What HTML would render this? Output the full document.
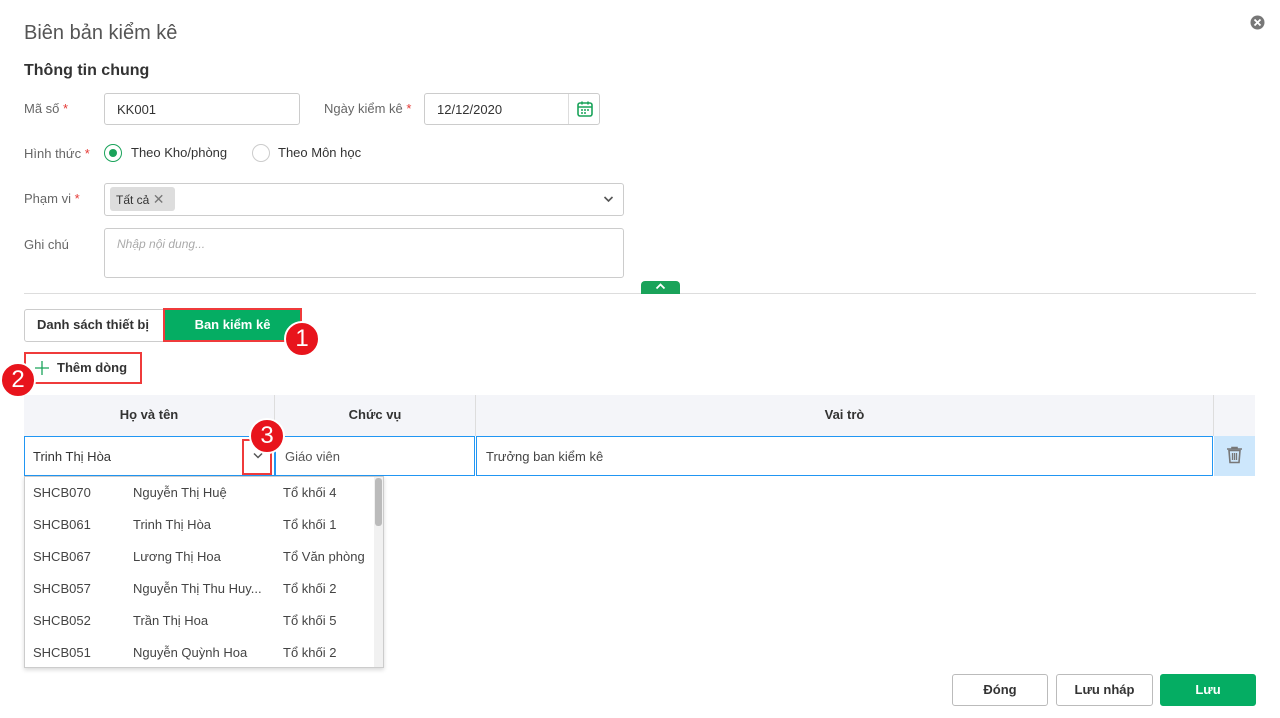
<!DOCTYPE html>
<html><head><meta charset="utf-8"><style>
*{box-sizing:border-box;margin:0;padding:0}
html,body{width:1280px;height:718px;overflow:hidden}
body{background:#fff;font-family:"Liberation Sans",sans-serif;color:#333;position:relative;font-size:13px;max-height:718px}
.a{position:absolute}
.lbl{color:#666;font-size:13px}
.req{color:#e53935}
.inp{border:1px solid #ccc;border-radius:3px;background:#fff}
.red{border:2px solid #ef3b3b}
.badge{width:36px;height:36px;border-radius:50%;background:#e8141c;border:2px solid #fff;color:#fff;font-size:24px;text-align:center;line-height:32px}
.th{background:#f4f5f9;font-weight:bold;font-size:13px;text-align:center;line-height:40px;color:#333}
.row{position:absolute;left:0;height:32px;line-height:32px;font-size:13px;color:#444;width:350px}
.row span{position:absolute}
.btn{border:1px solid #bbb;border-radius:3px;font-weight:bold;text-align:center;line-height:30px;font-size:13px;color:#333}
</style></head><body>
<div class="a" style="left:24px;top:22px;font-size:20px;color:#555">Biên bản kiểm kê</div>
<svg class="a" style="left:1250px;top:15px" width="15" height="15" viewBox="0 0 15 15"><circle cx="7.5" cy="7.5" r="7" fill="#777"/><path d="M4.5 4.5l6 6M10.5 4.5l-6 6" stroke="#fff" stroke-width="1.8"/></svg>
<div class="a" style="left:24px;top:62px;font-size:16px;font-weight:bold;color:#333">Thông tin chung</div>

<div class="a lbl" style="left:24px;top:101px">Mã số <span class="req">*</span></div>
<div class="a inp" style="left:104px;top:93px;width:196px;height:32px;padding:8px 12px">KK001</div>
<div class="a lbl" style="left:324px;top:101px">Ngày kiểm kê <span class="req">*</span></div>
<div class="a inp" style="left:424px;top:93px;width:176px;height:32px;padding:8px 12px">12/12/2020</div>
<div class="a" style="left:568px;top:94px;width:1px;height:30px;background:#ddd"></div>
<svg class="a" style="left:576px;top:100px" width="18" height="18" viewBox="0 0 18 18"><rect x="2" y="3" width="14" height="13" rx="2" fill="none" stroke="#1aa35a" stroke-width="1.6"/><path d="M2 7h14M6 1.5v3M12 1.5v3" stroke="#1aa35a" stroke-width="1.6"/><path d="M5 10h2M8 10h2M11 10h2M5 13h2M8 13h2" stroke="#1aa35a" stroke-width="1.4"/></svg>

<div class="a lbl" style="left:24px;top:146px">Hình thức <span class="req">*</span></div>
<div class="a" style="left:104px;top:144px;width:18px;height:18px;border:1px solid #1aa35a;border-radius:50%"></div>
<div class="a" style="left:109px;top:149px;width:8px;height:8px;background:#1aa35a;border-radius:50%"></div>
<div class="a" style="left:131px;top:145px">Theo Kho/phòng</div>
<div class="a" style="left:252px;top:144px;width:18px;height:18px;border:1px solid #ccc;border-radius:50%"></div>
<div class="a" style="left:278px;top:145px">Theo Môn học</div>

<div class="a lbl" style="left:24px;top:191px">Phạm vi <span class="req">*</span></div>
<div class="a inp" style="left:104px;top:183px;width:520px;height:33px"></div>
<div class="a" style="left:110px;top:187px;width:65px;height:24px;background:#ddd;border-radius:3px;font-size:12px;line-height:24px;padding-left:6px">Tất cả <span style="color:#777;font-size:14px">✕</span></div>
<svg class="a" style="left:603px;top:195px" width="11" height="8" viewBox="0 0 11 8"><path d="M1.5 2l4 4 4-4" fill="none" stroke="#555" stroke-width="1.6"/></svg>

<div class="a lbl" style="left:24px;top:237px">Ghi chú</div>
<div class="a inp" style="left:104px;top:228px;width:520px;height:50px;padding:8px 12px;color:#aaa;font-style:italic;font-size:12px">Nhập nội dung...</div>

<div class="a" style="left:24px;top:293px;width:1232px;height:1px;background:#ddd"></div>
<div class="a" style="left:641px;top:281px;width:39px;height:13px;background:#1aa35a;border-radius:4px 4px 0 0"></div>
<svg class="a" style="left:655px;top:283px" width="11" height="7" viewBox="0 0 11 7"><path d="M1.5 5.5l4-4 4 4" fill="none" stroke="#fff" stroke-width="1.8"/></svg>

<div class="a" style="left:24px;top:309px;width:270px;height:33px;border:1px solid #ccc;border-radius:3px"></div>
<div class="a" style="left:37px;top:317px;font-weight:bold;font-size:13px">Danh sách thiết bị</div>
<div class="a" style="left:163px;top:308px;width:139px;height:34px;background:#05ad63;border:2px solid #ef3b3b;color:#fff;font-weight:bold;text-align:center;line-height:30px">Ban kiểm kê</div>
<div class="a badge" style="left:284px;top:321px">1</div>

<div class="a red" style="left:24px;top:352px;width:118px;height:32px"></div>
<svg class="a" style="left:35px;top:361px" width="14" height="14" viewBox="0 0 14 14"><path d="M7 0v14M0 7h14" stroke="#1aa35a" stroke-width="1.3"/></svg>
<div class="a" style="left:57px;top:360px;font-weight:bold;font-size:13px">Thêm dòng</div>
<div class="a badge" style="left:0px;top:362px">2</div>

<div class="a th" style="left:24px;top:395px;width:250px;height:41px">Họ và tên</div>
<div class="a th" style="left:275px;top:395px;width:200px;height:41px">Chức vụ</div>
<div class="a th" style="left:476px;top:395px;width:737px;height:41px">Vai trò</div>
<div class="a th" style="left:1214px;top:395px;width:41px;height:41px"></div>
<div class="a" style="left:274px;top:395px;width:1px;height:41px;background:#ddd"></div>
<div class="a" style="left:475px;top:395px;width:1px;height:41px;background:#ddd"></div>
<div class="a" style="left:1213px;top:395px;width:1px;height:41px;background:#ddd"></div>

<div class="a" style="left:24px;top:436px;width:251px;height:40px;border:1px solid #2196f3;padding:12px 8px;font-size:13px">Trinh Thị Hòa</div>
<div class="a" style="left:275px;top:436px;width:200px;height:40px;border:1px solid #2196f3;padding:12px 9px;color:#555">Giáo viên</div>
<div class="a" style="left:476px;top:436px;width:737px;height:40px;border:1px solid #2196f3;padding:12px 9px;color:#444">Trưởng ban kiểm kê</div>
<div class="a" style="left:1214px;top:436px;width:41px;height:40px;background:#cde7fc"></div>
<svg class="a" style="left:1226px;top:446px" width="17" height="18" viewBox="0 0 17 18"><path d="M1 3h15M6 3V1.5h5V3" fill="none" stroke="#777" stroke-width="1.6"/><path d="M3 4.5h11l-1 12h-9z" fill="none" stroke="#777" stroke-width="1.6"/><path d="M6.5 7v7M8.5 7v7M10.5 7v7" stroke="#777" stroke-width="1.3"/></svg>
<div class="a red" style="left:242px;top:439px;width:30px;height:36px"></div>
<svg class="a" style="left:253px;top:452px" width="10" height="7" viewBox="0 0 10 7"><path d="M1 1.5l4 4 4-4" fill="none" stroke="#555" stroke-width="1.5"/></svg>
<div class="a badge" style="left:249px;top:418px">3</div>

<div class="a" style="left:24px;top:476px;width:360px;height:192px;border:1px solid #ccc;box-shadow:0 2px 4px rgba(0,0,0,.15);background:#fff;overflow:hidden">
<div class="row" style="top:0"><span style="left:8px">SHCB070</span><span style="left:108px">Nguyễn Thị Huệ</span><span style="left:258px">Tổ khối 4</span></div>
<div class="row" style="top:32px"><span style="left:8px">SHCB061</span><span style="left:108px">Trinh Thị Hòa</span><span style="left:258px">Tổ khối 1</span></div>
<div class="row" style="top:64px"><span style="left:8px">SHCB067</span><span style="left:108px">Lương Thị Hoa</span><span style="left:258px">Tổ Văn phòng</span></div>
<div class="row" style="top:96px"><span style="left:8px">SHCB057</span><span style="left:108px">Nguyễn Thị Thu Huy...</span><span style="left:258px">Tổ khối 2</span></div>
<div class="row" style="top:128px"><span style="left:8px">SHCB052</span><span style="left:108px">Trần Thị Hoa</span><span style="left:258px">Tổ khối 5</span></div>
<div class="row" style="top:160px"><span style="left:8px">SHCB051</span><span style="left:108px">Nguyễn Quỳnh Hoa</span><span style="left:258px">Tổ khối 2</span></div>
<div class="a" style="left:349px;top:0;width:9px;height:190px;background:#f1f1f1"></div>
<div class="a" style="left:350px;top:1px;width:7px;height:48px;background:#bbb;border-radius:3px"></div>
</div>

<div class="a btn" style="left:952px;top:674px;width:96px;height:32px">Đóng</div>
<div class="a btn" style="left:1056px;top:674px;width:97px;height:32px">Lưu nháp</div>
<div class="a btn" style="left:1160px;top:674px;width:96px;height:32px;background:#05ad63;border-color:#05ad63;color:#fff">Lưu</div>
</body></html>
